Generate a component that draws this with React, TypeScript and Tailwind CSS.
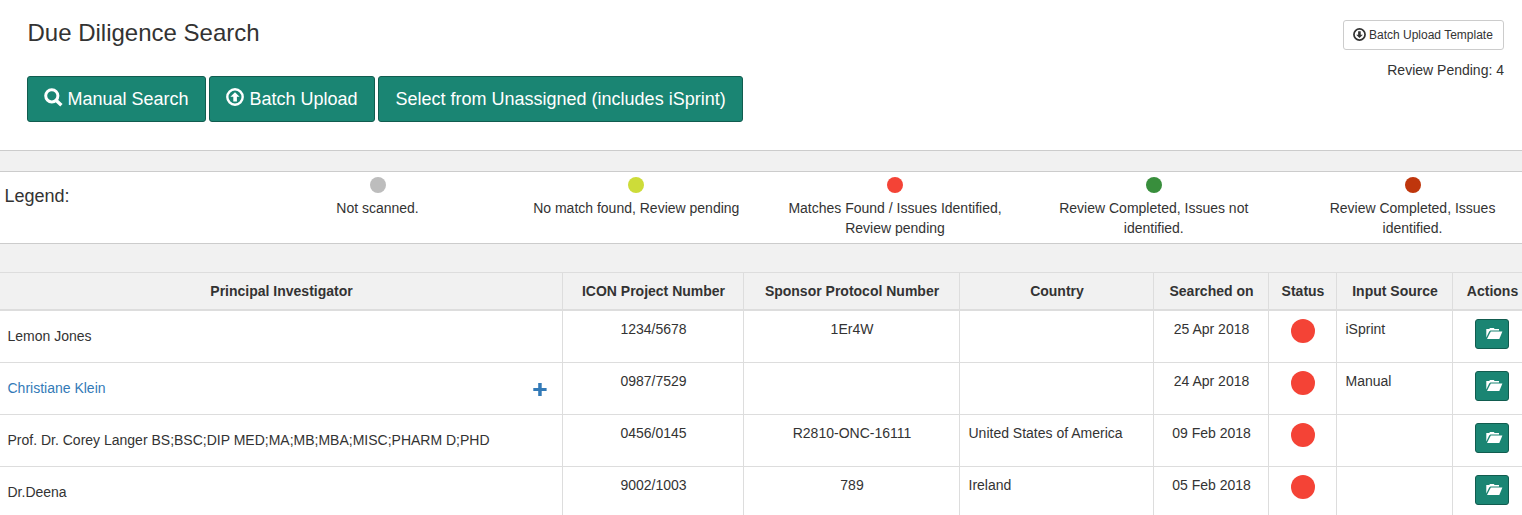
import React from "react";

function SearchIcon() {
  return (
    <svg className="mt-[11px] h-[19px] w-[19px] shrink-0" viewBox="0 0 19 19" fill="none" stroke="white">
      <circle cx="7.8" cy="7.8" r="6.1" strokeWidth="3" />
      <path d="M12 12.2 L17.4 17.2" strokeWidth="3.4" />
    </svg>
  );
}

function CircleArrow({ down = false, className }: { down?: boolean; className: string }) {
  return (
    <svg className={className} viewBox="0 0 18 18">
      <circle cx="9" cy="9" r="7.7" fill="none" stroke="currentColor" strokeWidth="2.4" />
      <path
        d="M9 4.2 L13.6 8.8 H10.9 V13.4 H7.3 V8.8 H4.4 Z"
        fill="currentColor"
        transform={down ? "rotate(180 9 9)" : undefined}
      />
    </svg>
  );
}

function FolderOpen() {
  return (
    <svg className="mb-px ml-1 h-[13px] w-[17px]" viewBox="0 0 17 13" fill="white">
      <path d="M0.3 10.5 V2 H3.2 L4 1 H7.8 L8.6 2 H13 V3.6 H4.4 L3.2 4.6 Z" />
      <path d="M4.8 4.4 H16.4 L13.3 12 H1 Z" />
    </svg>
  );
}

const legend = [
  { color: "bg-[#bdbdbd]", text: "Not scanned." },
  { color: "bg-[#cddc39]", text: "No match found, Review pending" },
  { color: "bg-[#f44336]", text: "Matches Found / Issues Identified, Review pending" },
  { color: "bg-[#388e3c]", text: "Review Completed, Issues not identified." },
  { color: "bg-[#bf360c]", text: "Review Completed, Issues identified." },
];

const headers = [
  "Principal Investigator",
  "ICON Project Number",
  "Sponsor Protocol Number",
  "Country",
  "Searched on",
  "Status",
  "Input Source",
  "Actions",
];

const rows = [
  { name: "Lemon Jones", project: "1234/5678", protocol: "1Er4W", country: "", date: "25 Apr 2018", source: "iSprint" },
  { name: "Christiane Klein", project: "0987/7529", protocol: "", country: "", date: "24 Apr 2018", source: "Manual", linked: true },
  {
    name: "Prof. Dr. Corey Langer BS;BSC;DIP MED;MA;MB;MBA;MISC;PHARM D;PHD",
    project: "0456/0145",
    protocol: "R2810-ONC-16111",
    country: "United States of America",
    date: "09 Feb 2018",
    source: "",
  },
  { name: "Dr.Deena", project: "9002/1003", protocol: "789", country: "Ireland", date: "05 Feb 2018", source: "" },
];

const columns = "grid w-[1532px] grid-cols-[563px_181px_216px_194px_115px_68px_116px_79px]";
const cell = "border-r border-[#ddd] pt-2 pr-[7.5px] pl-[8.5px]";
const primary =
  "flex h-[46px] rounded-[3px] border border-[#115c4f] bg-[#1a8573] text-[18px] leading-[44px] whitespace-nowrap text-white";

export default function App() {
  return (
    <div className="h-[515px] w-full overflow-hidden bg-[#f1f1f1] font-['Liberation_Sans',Arial,sans-serif] text-[14px] leading-5 text-[#333]">
      <header className="flex h-[151px] justify-between border-b border-[#ccc] bg-white pr-[18px] pl-[27px]">
        <div>
          <h1 className="mt-5 h-14 pl-[0.5px] text-[24px] leading-[26px]">Due Diligence Search</h1>
          <div className="flex gap-[3px]">
            <button className={`${primary} w-[179px] gap-[4.5px] pl-4`}>
              <SearchIcon />
              Manual Search
            </button>
            <button className={`${primary} w-[166px] gap-[5.5px] pl-4`}>
              <CircleArrow className="mt-[11px] h-[18px] w-[18px] shrink-0" />
              Batch Upload
            </button>
            <button className={`${primary} w-[365px] pl-[16.5px]`}>Select from Unassigned (includes iSprint)</button>
          </div>
        </div>
        <div className="flex flex-col items-end pt-5">
          <button className="flex h-[30px] w-[161px] gap-[3px] rounded-[3px] border border-[#ccc] bg-white pl-[9px] text-[12px] leading-7 whitespace-nowrap">
            <CircleArrow down className="mt-[7px] h-[13px] w-[13px] shrink-0" />
            Batch Upload Template
          </button>
          <p className="mt-[10px]">Review Pending: 4</p>
        </div>
      </header>

      <section className="mt-5 flex h-[73px] border-y border-[#ccc] bg-white">
        <div className="w-[248.15px] shrink-0 pt-[14px] pl-[4.5px] text-[18px]">Legend:</div>
        {legend.map((item) => (
          <div key={item.text} className="flex w-[258.75px] shrink-0 flex-col items-center px-[15px] pt-[5px] text-center">
            <span className={`mb-[5px] h-4 w-4 shrink-0 rounded-full ${item.color}`} />
            {item.text}
          </div>
        ))}
      </section>

      <div className="mt-7">
        <div className={`${columns} h-[39px] border-t border-b-2 border-[#ddd] text-center font-bold whitespace-nowrap`}>
          {headers.map((h) => (
            <div key={h} className={cell}>
              {h}
            </div>
          ))}
        </div>
        {rows.map((r) => (
          <div key={r.name} className={`${columns} h-[52px] border-b border-[#ddd] bg-white text-center whitespace-nowrap`}>
            <div className="flex justify-between border-r border-[#ddd] pt-[15px] pr-[15px] pl-[7.5px]">
              {r.linked ? <a className="text-[#337ab7]">{r.name}</a> : <span>{r.name}</span>}
              {r.linked && (
                <svg className="mt-[5px] h-[14px] w-[14px]" viewBox="0 0 14 14" fill="#337ab7">
                  <path d="M0.3 5 H5.2 V0 H8.7 V5 H13.6 V8 H8.7 V13 H5.2 V8 H0.3 Z" />
                </svg>
              )}
            </div>
            <div className={cell}>{r.project}</div>
            <div className={cell}>{r.protocol}</div>
            <div className={`${cell} text-left`}>{r.country}</div>
            <div className={cell}>{r.date}</div>
            <div className={`${cell} flex justify-center`}>
              <span className="-ml-px h-6 w-6 rounded-full bg-[#f44336]" />
            </div>
            <div className={`${cell} text-left`}>{r.source}</div>
            <div className={`${cell} flex justify-center`}>
              <button className="-ml-px flex h-[30px] w-[34px] items-center justify-center rounded-[3px] border border-[#115c4f] bg-[#1a8573]">
                <FolderOpen />
              </button>
            </div>
          </div>
        ))}
      </div>
    </div>
  );
}
